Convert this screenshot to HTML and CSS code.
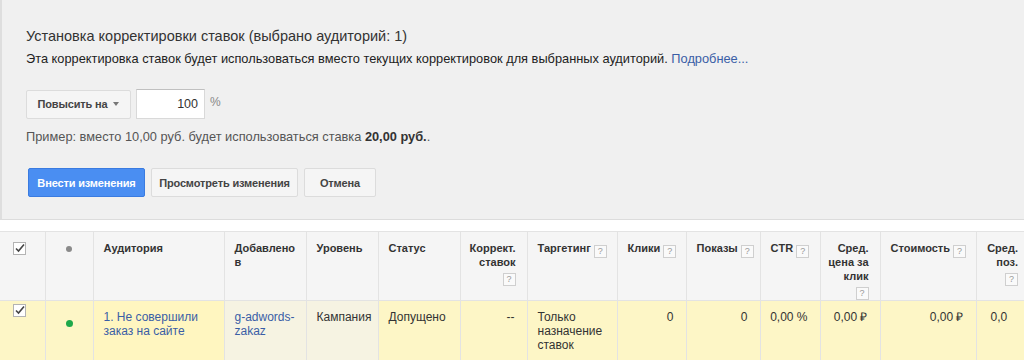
FILE: index.html
```html
<!DOCTYPE html>
<html lang="ru">
<head>
<meta charset="utf-8">
<link rel="stylesheet" href="styles.css">
</head>
<body>
<div class="panel">
  <div class="title">Установка корректировки ставок (выбрано аудиторий: 1)</div>
  <div class="desc">Эта корректировка ставок будет использоваться вместо текущих корректировок для выбранных аудиторий. <a class="link" href="#">Подробнее...</a></div>
  <div class="controls">
    <div class="btn dropdown">Повысить на <span class="caret"></span></div>
    <div class="input">100</div>
    <span class="pct">%</span>
  </div>
  <div class="example">Пример: вместо 10,00 руб. будет использоваться ставка <b>20,00 руб.</b>.</div>
  <div class="actions">
    <div class="btn primary">Внести изменения</div>
    <div class="btn preview">Просмотреть изменения</div>
    <div class="btn cancel">Отмена</div>
  </div>
</div>

<div class="tablewrap">
<table class="grid">
  <colgroup>
    <col style="width:45px"><col style="width:48px"><col style="width:131px"><col style="width:82px">
    <col style="width:72px"><col style="width:82px"><col style="width:67px"><col style="width:90px">
    <col style="width:69px"><col style="width:74px"><col style="width:60px"><col style="width:60px">
    <col style="width:96px"><col style="width:53px">
  </colgroup>
  <thead>
    <tr>
      <th class="cb"><svg class="check" width="13" height="13" viewBox="0 0 13 13"><rect x="0.5" y="0.5" width="12" height="12" fill="#fff" stroke="#b3b3b3"/><path d="M3 6.5 L5.5 9 L11 2.5" fill="none" stroke="#444" stroke-width="1.6"/></svg></th>
      <th class="dotc"><span class="dot gray"></span></th>
      <th>Аудитория</th>
      <th>Добавлено в</th>
      <th>Уровень</th>
      <th>Статус</th>
      <th class="r">Коррект. ставок<br><span class="help">?</span></th>
      <th>Таргетинг <span class="help">?</span></th>
      <th>Клики <span class="help">?</span></th>
      <th>Показы <span class="help">?</span></th>
      <th>CTR <span class="help">?</span></th>
      <th class="r">Сред. цена за клик<br><span class="help">?</span></th>
      <th>Стоимость <span class="help">?</span></th>
      <th class="r">Сред. поз.<br><span class="help">?</span></th>
    </tr>
  </thead>
  <tbody>
    <tr>
      <td class="cb"><svg class="check" width="13" height="13" viewBox="0 0 13 13"><rect x="0.5" y="0.5" width="12" height="12" fill="#fff" stroke="#b3b3b3"/><path d="M3 6.5 L5.5 9 L11 2.5" fill="none" stroke="#444" stroke-width="1.6"/></svg></td>
      <td class="dotc"><span class="dot green"></span></td>
      <td class="aud"><a class="link" href="#">1. Не совершили заказ на сайте</a></td>
      <td class="pale"><a class="link" href="#">g-adwords-zakaz</a></td>
      <td class="pale">Кампания</td>
      <td>Допущено</td>
      <td class="r">--</td>
      <td>Только назначение ставок</td>
      <td class="r">0</td>
      <td class="r">0</td>
      <td class="r nw">0,00 %</td>
      <td class="r nw">0,00 ₽</td>
      <td class="r nw">0,00 ₽</td>
      <td class="last">0,0</td>
    </tr>
  </tbody>
</table>
</div>
</body>
</html>
```

FILE: styles.css
```css
html, body {
  margin: 0;
  padding: 0;
  background: #fff;
  overflow: hidden;
}
body {
  width: 1024px;
  height: 360px;
  font-family: "Liberation Sans", Arial, sans-serif;
  color: #222;
}
.panel {
  background: #f0f0f0;
  border-left: 2px solid #dedede;
  border-bottom: 1px solid #dcdcdc;
  height: 220px;
  box-sizing: border-box;
  padding: 26px 0 0 24px;
}
.title {
  font-size: 14.5px;
  line-height: 20px;
  color: #333;
}
.desc {
  font-size: 12.8px;
  line-height: 16px;
  margin-top: 5px;
  color: #222;
}
.link {
  color: #3a5ea6;
  text-decoration: none;
}
.controls {
  display: flex;
  align-items: center;
  margin-top: 22px;
}
.btn {
  box-sizing: border-box;
  height: 29px;
  display: inline-flex;
  align-items: center;
  justify-content: center;
  white-space: nowrap;
  padding: 0;
  background: #f5f5f5;
  border: 1px solid #dcdcdc;
  border-radius: 2px;
  font-size: 11px;
  font-weight: bold;
  color: #444;
  letter-spacing: -0.15px;
}
.dropdown {
  width: 105px;
}
.caret {
  display: inline-block;
  margin-left: 6px;
  width: 0;
  height: 0;
  border-left: 3.5px solid transparent;
  border-right: 3.5px solid transparent;
  border-top: 4px solid #777;
}
.input {
  box-sizing: border-box;
  margin-left: 5px;
  width: 69px;
  height: 30px;
  background: #fff;
  border: 1px solid #d9d9d9;
  border-top-color: #c0c0c0;
  font-size: 12.5px;
  color: #333;
  text-align: right;
  line-height: 28px;
  padding-right: 6px;
}
.pct {
  margin-left: 5px;
  font-size: 12px;
  color: #888;
  align-self: flex-start;
  margin-top: 6px;
}
.example {
  font-size: 12.8px;
  line-height: 16px;
  color: #555;
  margin-top: 10px;
}
.example b {
  color: #333;
}
.actions {
  display: flex;
  gap: 6px;
  margin-top: 23px;
  padding-left: 2px;
}
.btn.primary {
  background: #4a8ef2;
  border-color: #3a7be0;
  color: #fff;
  width: 117px;
}
.btn.preview {
  width: 147px;
}
.btn.cancel {
  width: 72px;
}
.tablewrap {
  margin-top: 11px;
  width: 1029px;
}
.grid {
  border-collapse: collapse;
  table-layout: fixed;
  width: 1029px;
}
.grid th, .grid td {
  border-left: 1px solid #e3e3e3;
  vertical-align: top;
  text-align: left;
  padding: 0 4px 0 10px;
}
.grid th:first-child, .grid td:first-child {
  border-left: none;
}
.grid th {
  background: #f5f5f5;
  border-top: 1px solid #e3e3e3;
  border-bottom: 1px solid #e3e3e3;
  font-size: 11px;
  font-weight: bold;
  color: #333;
  line-height: 14px;
  padding-top: 9px;
  height: 54px;
}
.grid td {
  background: #fdf6c6;
  font-size: 12px;
  line-height: 14px;
  color: #333;
  padding-top: 9px;
  height: 52px;
}
.grid td.nw {
  white-space: nowrap;
}
.grid td.aud {
  background: #fff6c0;
}
.grid td.pale {
  background: #f6f3e2;
}
.grid th.r {
  text-align: right;
  padding-left: 4px;
  padding-right: 11px;
}
.grid td.r {
  text-align: right;
  padding-left: 4px;
  padding-right: 12px;
}
.grid td.last {
  padding-left: 14px;
}
.grid .cb {
  padding: 10px 0 0 13px;
}
.grid td.cb {
  padding-top: 3px;
}
.check {
  display: block;
}
.grid .dotc {
  text-align: center;
  padding: 14px 0 0 0;
}
.grid td.dotc {
  padding-top: 19px;
}
.dot {
  display: inline-block;
  width: 6px;
  height: 6px;
  border-radius: 50%;
  vertical-align: top;
}
.dot.gray { background: #8a8a8a; }
.dot.green { background: #1ea84a; width: 7px; height: 7px; }
.help {
  display: inline-block;
  box-sizing: border-box;
  width: 13px;
  height: 13px;
  border: 1px solid #cfcfcf;
  background: #fafafa;
  color: #999;
  font-size: 9px;
  font-weight: normal;
  line-height: 11px;
  text-align: center;
  vertical-align: -2px;
}
```
